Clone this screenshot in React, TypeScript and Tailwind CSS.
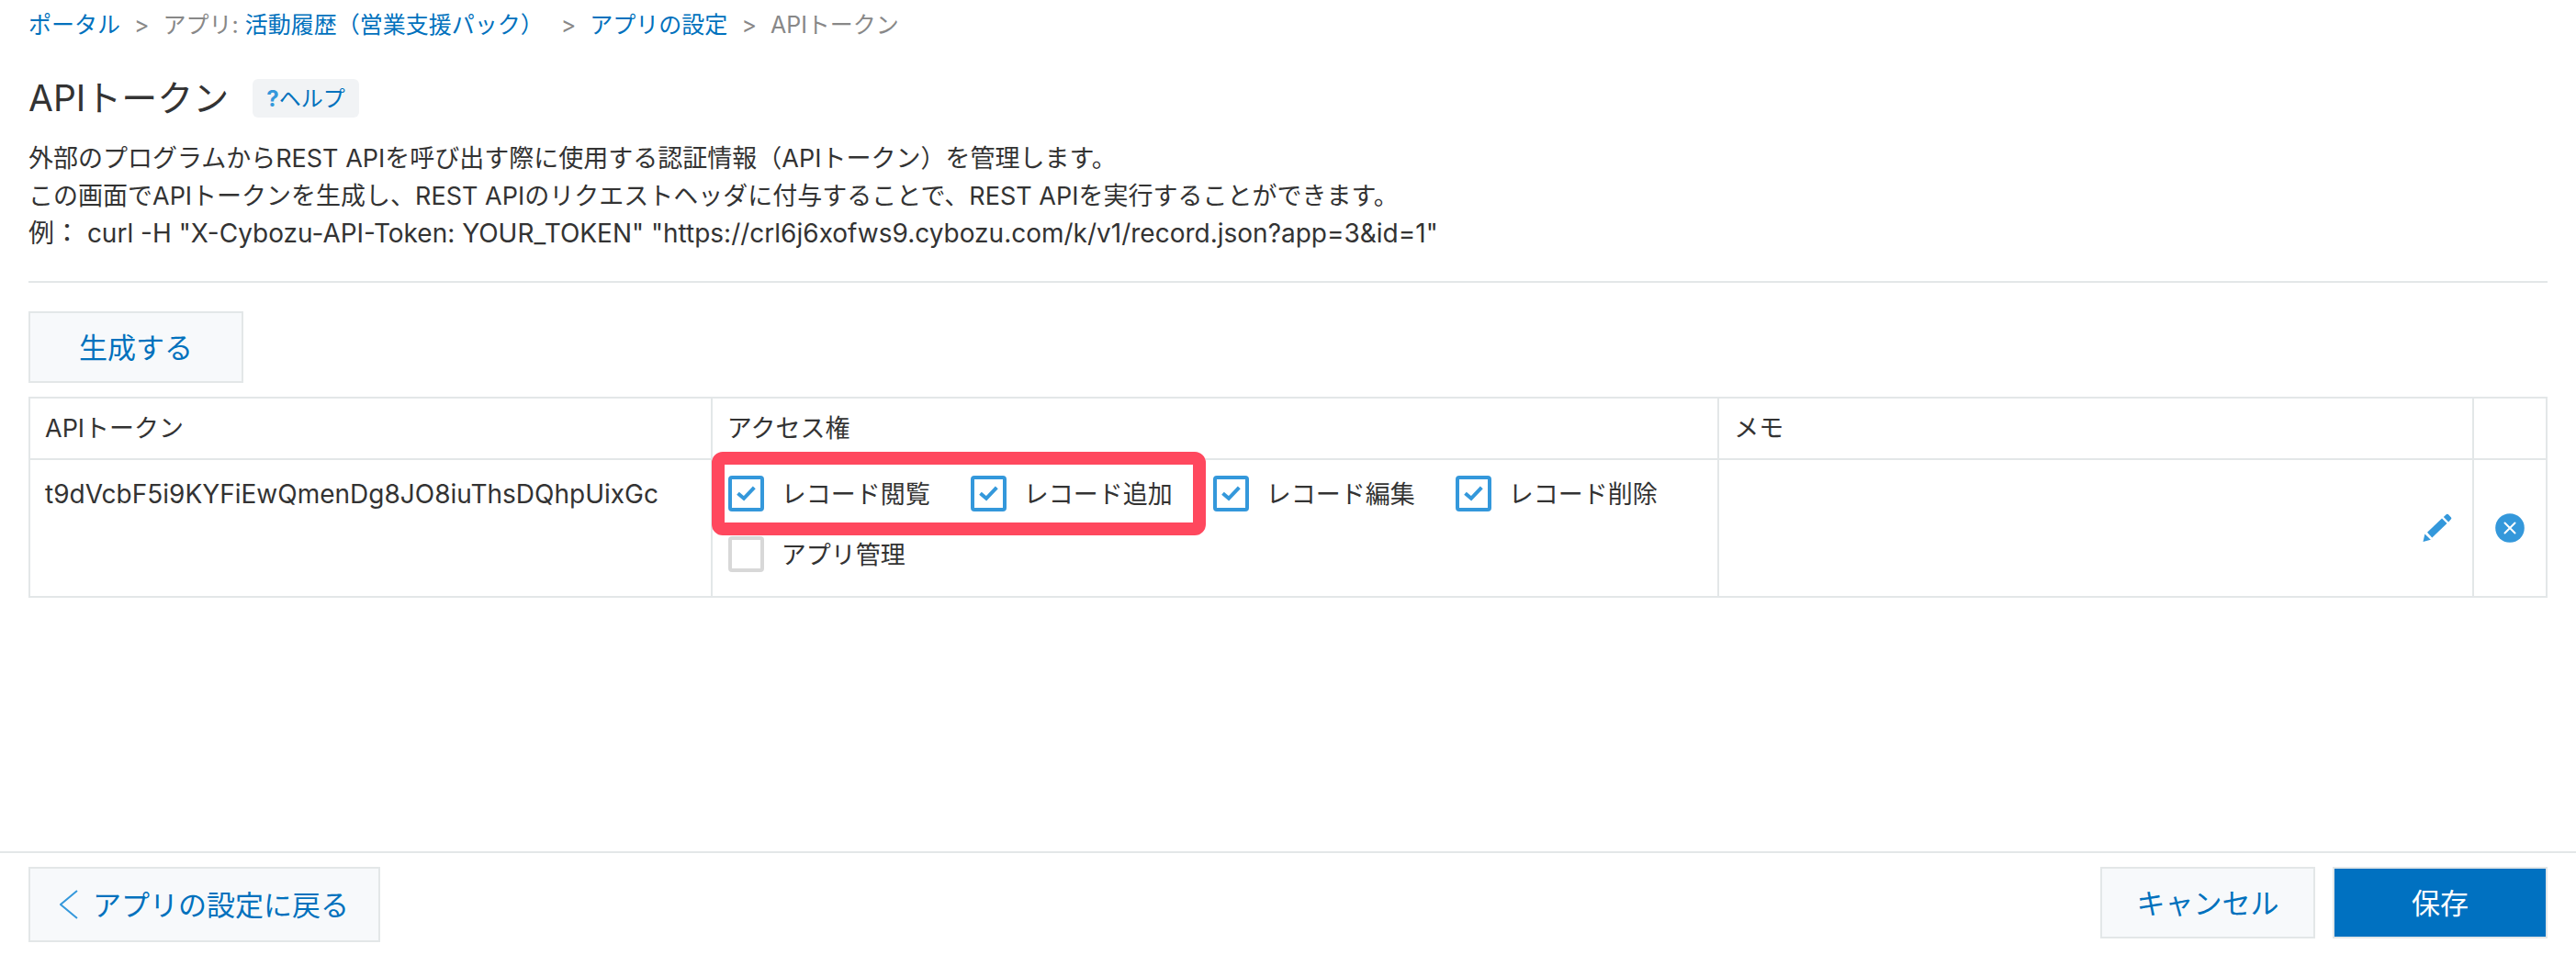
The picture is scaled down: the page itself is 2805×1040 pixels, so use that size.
import React, { useState } from 'react';

interface Permission {
  id: string;
  label: string;
  checked: boolean;
}

const initialPermissions: Permission[] = [
  { id: 'view', label: 'レコード閲覧', checked: true },
  { id: 'add', label: 'レコード追加', checked: true },
  { id: 'edit', label: 'レコード編集', checked: true },
  { id: 'delete', label: 'レコード削除', checked: true },
  { id: 'manage', label: 'アプリ管理', checked: false },
];

const Separator: React.FC = () => <span className="mx-[15px]">&gt;</span>;

const Breadcrumbs: React.FC = () => (
  <nav className="flex items-center whitespace-nowrap text-[25px] leading-9 text-[#888888]">
    <a href="#portal" className="text-[#0071bd]">ポータル</a>
    <Separator />
    <span className="pr-1">
      アプリ: <a href="#app" className="text-[#0071bd]">活動履歴（営業支援パック）</a>
    </span>
    <Separator />
    <a href="#settings" className="text-[#0071bd]">アプリの設定</a>
    <Separator />
    <span>APIトークン</span>
  </nav>
);

interface PermissionCheckboxProps {
  permission: Permission;
  onToggle: (id: string) => void;
}

const PermissionCheckbox: React.FC<PermissionCheckboxProps> = ({ permission, onToggle }) => (
  <label htmlFor={permission.id} className="flex h-10 w-[264px] items-center whitespace-nowrap">
    <span className="relative h-[39px] w-[39px] shrink-0">
      <input
        id={permission.id}
        type="checkbox"
        checked={permission.checked}
        onChange={() => onToggle(permission.id)}
        className="block h-full w-full appearance-none rounded-[4px] border-4 border-[#d8d8d8] bg-white checked:border-[#3498db]"
      />
      {permission.checked && (
        <svg className="pointer-events-none absolute inset-0 h-full w-full" viewBox="0 0 39 39" fill="none">
          <path d="M10.5 19.2L17 24.8L28.3 12.8" stroke="#3498db" strokeWidth="4" />
        </svg>
      )}
    </span>
    <span className="ml-[19px] pt-0.5">{permission.label}</span>
  </label>
);

const PencilIcon: React.FC = () => (
  <svg className="h-8 w-8" viewBox="0 0 32 32" fill="#3498db">
    <path d="M0.5 31L2.4 22.6L8.8 28.8Z" />
    <path d="M5 20.8L21 5.5L26.5 11L10.3 26.6Z" />
    <path d="M22.8 4L26 1Q27 0.3 28 1.2L31 4.5Q31.8 5.5 31 6.3L28.2 9.4Z" />
  </svg>
);

const DeleteIcon: React.FC = () => (
  <svg className="h-8 w-8" viewBox="0 0 32 32" fill="none">
    <circle cx="16" cy="16" r="15.8" fill="#3498db" />
    <path d="M10.5 10.5L21.5 21.5M21.5 10.5L10.5 21.5" stroke="white" strokeWidth="2" strokeLinecap="round" />
  </svg>
);

const App: React.FC = () => {
  const [permissions, setPermissions] = useState(initialPermissions);

  const handleToggle = (id: string) => {
    setPermissions((prev) => prev.map((p) => (p.id === id ? { ...p, checked: !p.checked } : p)));
  };

  return (
    <div className="flex min-h-screen flex-col bg-white font-['Inter','Noto_Sans_CJK_JP',sans-serif] text-[27px] leading-[41px] text-[#333333]">
      <main className="flex-1 px-[31px] pt-[9px]">
        <Breadcrumbs />

        <div className="mt-[38px] flex h-12 items-center">
          <h1 className="text-[39px] leading-[48px]">APIトークン</h1>
          <a
            href="#help"
            className="ml-[26px] flex h-[42px] items-center rounded-md bg-[#f1f3f5] px-[15px] text-[24px] text-[#0071bd]"
          >
            <span className="font-bold text-[#3498db]">?</span>
            ヘルプ
          </a>
        </div>

        <div className="mt-[21px]">
          <p>外部のプログラムからREST APIを呼び出す際に使用する認証情報（APIトークン）を管理します。</p>
          <p>この画面でAPIトークンを生成し、REST APIのリクエストヘッダに付与することで、REST APIを実行することができます。</p>
          <p className="text-[28px]">
            例： curl -H "X-Cybozu-API-Token: YOUR_TOKEN" "https://crl6j6xofws9.cybozu.com/k/v1/record.json?app=3&amp;id=1"
          </p>
        </div>

        <hr className="mt-[31px] border-t-2 border-[#e3e7e8]" />

        <button
          type="button"
          className="mt-[31px] block h-[78px] w-[234px] border-2 border-[#e3e7e8] bg-[#f7f9fb] text-[31px] text-[#0071bd]"
        >
          生成する
        </button>

        <table className="mt-[15px] w-full table-fixed border-collapse text-left">
          <colgroup>
            <col className="w-[27.1%]" />
            <col className="w-[40%]" />
            <col />
            <col className="w-20" />
          </colgroup>
          <thead>
            <tr className="h-[67px]">
              <th className="border-2 border-[#e3e7e8] px-4 font-normal">APIトークン</th>
              <th className="border-2 border-[#e3e7e8] px-4 font-normal">アクセス権</th>
              <th className="border-2 border-[#e3e7e8] px-4 font-normal">メモ</th>
              <th className="border-2 border-[#e3e7e8]" />
            </tr>
          </thead>
          <tbody>
            <tr className="h-[150px]">
              <td className="border-2 border-[#e3e7e8] px-4 pt-[17px] align-top text-[28px]">
                t9dVcbF5i9KYFiEwQmenDg8JO8iuThsDQhpUixGc
              </td>
              <td className="border-2 border-[#e3e7e8] px-[17px] pt-4 align-top">
                <div className="flex flex-wrap gap-y-[26px]">
                  {/* Permissions required by the integration */}
                  <div className="relative flex">
                    {permissions.slice(0, 2).map((p) => (
                      <PermissionCheckbox key={p.id} permission={p} onToggle={handleToggle} />
                    ))}
                    <span className="pointer-events-none absolute -top-[25px] -bottom-[26px] -left-[18px] right-2 rounded-xl border-[14px] border-[#ff485e]" />
                  </div>
                  {permissions.slice(2).map((p) => (
                    <PermissionCheckbox key={p.id} permission={p} onToggle={handleToggle} />
                  ))}
                </div>
              </td>
              <td className="border-2 border-[#e3e7e8] px-[22px]">
                <button type="button" aria-label="編集" className="ml-auto block">
                  <PencilIcon />
                </button>
              </td>
              <td className="border-2 border-[#e3e7e8]">
                <button type="button" aria-label="削除" className="mx-auto block">
                  <DeleteIcon />
                </button>
              </td>
            </tr>
          </tbody>
        </table>
      </main>

      <footer className="flex items-start justify-between border-t-2 border-[#e3e7e8] px-[31px] pt-[15px] pb-[14px] text-[31px]">
        <button
          type="button"
          className="flex h-[82px] items-center gap-4 border-2 border-[#e3e7e8] bg-[#f7f9fb] px-8 text-[#0071bd]"
        >
          <svg className="h-8 w-5" viewBox="0 0 20 32" fill="none">
            <path d="M19 1L1 16L19 31" stroke="#3498db" strokeWidth="2" />
          </svg>
          アプリの設定に戻る
        </button>
        <div className="flex gap-[19px]">
          <button type="button" className="h-[78px] w-[234px] border-2 border-[#e3e7e8] bg-[#f7f9fb] text-[#0071bd]">
            キャンセル
          </button>
          <button type="button" className="h-[78px] w-[234px] border-2 border-[#e3e7e8] bg-[#0071c1] text-white">
            保存
          </button>
        </div>
      </footer>
    </div>
  );
};

export default App;
